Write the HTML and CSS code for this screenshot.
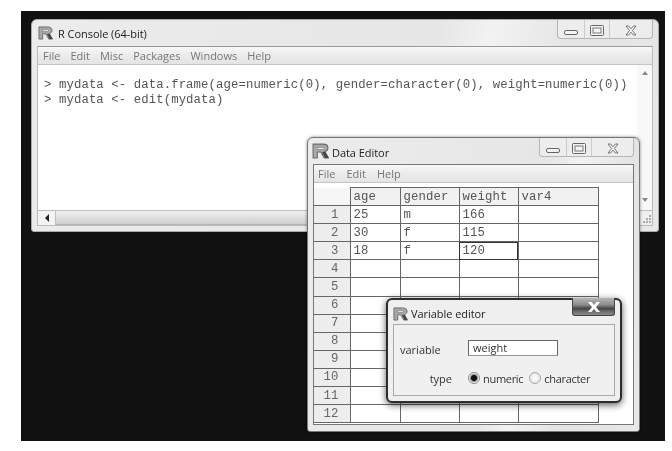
FILE: index.html
```html
<!DOCTYPE html>
<html lang="en">
<head>
<meta charset="utf-8">
<title>R Console</title>
<link rel="stylesheet" href="styles.css">
</head>
<body>
<svg class="defs" width="0" height="0" aria-hidden="true">
  <symbol id="rlogo" viewBox="0 0 16 15">
    <path d="M1 1H10.5C14 1 15 3 15 4.7C15 6.4 13.8 7.7 12 8.1L15.5 14H11.5L8.3 8.4H5V14H1Z" fill="#a8a8a8" stroke="#6a6a6a" stroke-width="1"/>
    <path d="M5 4H10C11 4 11.4 4.4 11.4 5C11.4 5.6 11 6 10 6H5Z" fill="#f4f4f4" stroke="#777" stroke-width=".7"/>
    <path d="M9.5 8.6L12.4 14H15.5L12.3 8.2Z" fill="#444"/>
  </symbol>
  <symbol id="btn-min" viewBox="0 0 14 5"><rect x=".5" y=".5" width="13" height="4" rx="1.5" fill="#f4f4f4" stroke="#666"/></symbol>
  <symbol id="btn-max" viewBox="0 0 14 11"><rect x=".5" y=".5" width="13" height="10" rx="1" fill="#f4f4f4" stroke="#666"/><rect x="3" y="3" width="8" height="5" fill="none" stroke="#777"/></symbol>
  <symbol id="btn-x" viewBox="0 0 12 11"><path d="M1 1H3.6L6 3.8L8.4 1H11L7.4 5.5L11 10H8.4L6 7.2L3.6 10H1L4.6 5.5Z" fill="#f4f4f4" stroke="#666" stroke-width=".9"/></symbol>
  <symbol id="btn-close" viewBox="0 0 14 12"><path d="M1 1H4.4L7 4L9.6 1H13L9 6L13 11H9.6L7 8L4.4 11H1L5 6Z" fill="#fff"/></symbol>
</svg>

<main class="desktop">

  <section class="window console">
    <header class="titlebar console-title">
      <svg class="logo"><use href="#rlogo"/></svg>
      <span class="title">R Console (64-bit)</span>
      <div class="controls controls-console">
        <span class="ctl ctl-min"><svg class="g-min"><use href="#btn-min"/></svg></span>
        <span class="ctl ctl-max"><svg class="g-max"><use href="#btn-max"/></svg></span>
        <span class="ctl ctl-x"><svg class="g-x"><use href="#btn-x"/></svg></span>
      </div>
    </header>
    <div class="client console-client">
      <nav class="menu">
        <span>File</span><span>Edit</span><span>Misc</span><span>Packages</span><span>Windows</span><span>Help</span>
      </nav>
      <div class="console-body">
        <pre class="console-text">&gt; mydata &lt;- data.frame(age=numeric(0), gender=character(0), weight=numeric(0))
&gt; mydata &lt;- edit(mydata)</pre>
        <div class="vscroll"><span class="arrow-up"></span><span class="arrow-down"></span></div>
      </div>
      <div class="hscroll">
        <span class="hs-left"><span class="arrow-left"></span></span>
        <span class="hs-thumb"></span>
        <span class="grip"><svg class="grip-dots" viewBox="0 0 11 11"><path d="M8 1h2v2H8zM5 4h2v2H5zM8 4h2v2H8zM2 7h2v2H2zM5 7h2v2H5zM8 7h2v2H8z" fill="#aaa"/></svg></span>
      </div>
    </div>
  </section>

  <section class="window editor">
    <header class="titlebar editor-title">
      <svg class="logo logo-big"><use href="#rlogo"/></svg>
      <span class="title">Data Editor</span>
      <div class="controls controls-editor">
        <span class="ctl ctl-min"><svg class="g-min"><use href="#btn-min"/></svg></span>
        <span class="ctl ctl-max"><svg class="g-max"><use href="#btn-max"/></svg></span>
        <span class="ctl ctl-x"><svg class="g-x"><use href="#btn-x"/></svg></span>
      </div>
    </header>
    <div class="client editor-client">
      <nav class="menu menu-editor"><span>File</span><span>Edit</span><span>Help</span></nav>
      <table class="sheet">
        <colgroup><col class="c0"><col class="c1"><col class="c2"><col class="c3"><col class="c4"></colgroup>
        <thead><tr><th class="corner"></th><th>age</th><th>gender</th><th>weight</th><th>var4</th></tr></thead>
        <tbody>
          <tr><th>1</th><td>25</td><td>m</td><td>166</td><td></td></tr>
          <tr><th>2</th><td>30</td><td>f</td><td>115</td><td></td></tr>
          <tr><th>3</th><td>18</td><td>f</td><td class="selected">120</td><td></td></tr>
          <tr><th>4</th><td></td><td></td><td></td><td></td></tr>
          <tr><th>5</th><td></td><td></td><td></td><td></td></tr>
          <tr><th>6</th><td></td><td></td><td></td><td></td></tr>
          <tr><th>7</th><td></td><td></td><td></td><td></td></tr>
          <tr><th>8</th><td></td><td></td><td></td><td></td></tr>
          <tr><th>9</th><td></td><td></td><td></td><td></td></tr>
          <tr><th>10</th><td></td><td></td><td></td><td></td></tr>
          <tr><th>11</th><td></td><td></td><td></td><td></td></tr>
          <tr><th>12</th><td></td><td></td><td></td><td></td></tr>
        </tbody>
      </table>
    </div>
  </section>

  <section class="window dialog">
    <header class="titlebar dialog-title">
      <svg class="logo"><use href="#rlogo"/></svg>
      <span class="title">Variable editor</span>
      <span class="close"><svg class="g-close"><use href="#btn-close"/></svg></span>
    </header>
    <div class="dialog-client">
      <span class="lbl">variable</span>
      <span class="field">weight</span>
      <span class="lbl lbl-type">type</span>
      <div class="radios">
        <span class="radio on"></span><span>numeric</span>
        <span class="radio"></span><span>character</span>
      </div>
    </div>
  </section>

</main>
</body>
</html>
```

FILE: styles.css
```css
* { box-sizing: border-box; }
html, body { margin: 0; padding: 0; background: #fff; }
body { width: 672px; height: 451px; overflow: hidden; padding: 11px 7px 10px 21px; font-family: "Open Sans", "Liberation Sans", sans-serif; }
.defs { position: absolute; }
.desktop { position: relative; width: 644px; height: 430px; background: #111; filter: blur(.45px); }

.window { position: absolute; display: flex; flex-direction: column; border-radius: 6px 6px 3px 3px; background: linear-gradient(105deg, #ececec 0%, #e6e6e6 60%, #f2f2f2 68%, #e4e4e4 80%, #e8e8e8 100%); }
.console { left: 10px; top: 8px; width: 628px; height: 213px; border: 1px solid #aaa; padding: 0 5px 5px; background-color: #eee; }
.editor { left: 286px; top: 126px; width: 333px; height: 295px; border: 1px solid #777; padding: 0 5px 6px; box-shadow: 0 0 3px rgba(0,0,0,.5); }
.dialog { left: 365px; top: 287px; width: 236px; height: 105px; border: 2px solid #2c2c2c; border-radius: 6px; padding: 0 5px 5px; background: #efefef; box-shadow: 0 2px 7px rgba(0,0,0,.65); }

.titlebar { display: flex; align-items: center; flex: none; position: relative; }
.console-title { height: 26px; }
.editor-title { height: 26px; }
.dialog-title { height: 24px; }
.logo { width: 15px; height: 14px; flex: none; margin-left: 1px; }
.logo-big { width: 17px; height: 16px; margin-left: -1px; }
.title { font-size: 11px; color: #222; margin-left: 5px; letter-spacing: -.05px; }
.editor-title .title { margin-left: 3px; margin-top: 2px; }
.dialog-title .title { margin-left: 3px; margin-top: 2px; }
.dialog-title .logo { margin-left: 0; margin-top: 3px; }

.controls { position: absolute; top: 0; display: flex; height: 19px; border: 1px solid #b5b5b5; border-top: 0; border-radius: 0 0 4px 4px; background: #ededed; }
.controls-console { right: 0; width: 96px; }
.controls-editor { right: 0; width: 95px; }
.ctl { display: flex; justify-content: center; border-right: 1px solid #ccc; }
.ctl:last-child { border-right: 0; flex: 1; }
.ctl-min { width: 27px; padding-top: 10px; }
.ctl-max { width: 25px; padding-top: 5px; }
.ctl-x { padding-top: 5px; }
.g-min { width: 14px; height: 5px; }
.g-max { width: 14px; height: 11px; }
.g-x { width: 12px; height: 11px; }

.client { flex: 1; min-height: 0; display: flex; flex-direction: column; border: 1px solid #8c8c8c; background: #fff; }
.console-client { border-color: #999 #bbb #bbb #bbb; }
.menu { display: flex; gap: 10px; flex: none; height: 18px; align-items: center; padding-left: 5px; font-size: 11px; color: #777; background: linear-gradient(#f8f8f8, #ececec 45%, #e4e4e4); border-bottom: 1px solid #c4c4c4; }
.menu-editor { gap: 11px; padding-left: 4px; }

.console-body { flex: 1; min-height: 0; display: flex; }
.console-text { flex: 1; margin: 0; padding: 13px 0 0 6px; font: 12.3px/15px "Liberation Mono", monospace; letter-spacing: .1px; color: #555; }
.vscroll { width: 15px; flex: none; display: flex; flex-direction: column; justify-content: space-between; align-items: center; padding: 6px 0 8px; background: #f8f8f8; }
.arrow-up { border: 3px solid transparent; border-top: 0; border-bottom: 4px solid #888; }
.arrow-down { border: 3px solid transparent; border-bottom: 0; border-top: 4px solid #888; }
.hscroll { height: 15px; flex: none; display: flex; background: #eee; border-top: 1px solid #bdbdbd; }
.hs-left { width: 17px; display: flex; align-items: center; justify-content: center; background: #f4f4f4; }
.arrow-left { border: 4px solid transparent; border-left: 0; border-right: 4px solid #222; }
.hs-thumb { flex: 1; background: linear-gradient(#f0f0f0, #dcdcdc 60%, #cfcfcf); border-left: 1px solid #c0c0c0; border-bottom: 1px solid #b5b5b5; }
.grip { width: 15px; flex: none; display: flex; align-items: flex-end; justify-content: flex-end; background: #f0f0f0; }
.grip-dots { width: 11px; height: 11px; }

.editor-client { border-color: #777; }
.sheet { margin-top: 4px; border-collapse: collapse; table-layout: fixed; width: 284px; font: 12.3px "Liberation Mono", monospace; letter-spacing: .1px; color: #555; }
.c0 { width: 36px; }
.c1 { width: 50px; }
.c2 { width: 59px; }
.c3 { width: 59px; }
.c4 { width: 80px; }
.sheet tr { height: 18.1px; }
.sheet th, .sheet td { border: 1px solid #666; padding: 0 0 0 3px; font-weight: 400; text-align: left; line-height: 14px; overflow: hidden; white-space: nowrap; }
.sheet thead th { background: #f1f1f1; }
.sheet .corner { background: #f6f6f6; border-top: 0; border-left: 0; }
.sheet tbody th { text-align: right; padding: 0 11px 0 0; background: #ededed; color: #666; border-left: 0; }
.sheet td.selected { outline: 1px solid #333; outline-offset: -1px; }

.close { position: absolute; right: 0; top: -2px; width: 43px; height: 18px; display: flex; align-items: center; justify-content: center; background: linear-gradient(#b5b5b5, #8c8c8c 40%, #454545 62%, #6a6a6a 78%, #8a8a8a); border: 1px solid #444; border-top: 0; border-radius: 0 0 3px 3px; }
.g-close { width: 14px; height: 12px; }
.dialog-client { flex: 1; min-height: 0; display: grid; grid-template-columns: 68px 1fr; grid-template-rows: 40px 1fr; border: 1px solid #aaa; background: #f0f0f0; font-size: 11px; color: #333; padding-left: 6px; }
.lbl { align-self: start; margin-top: 17px; }
.lbl-type { justify-self: end; margin-top: 6px; padding-right: 16px; }
.field { align-self: start; margin-top: 15px; width: 90px; height: 16px; padding-left: 4px; line-height: 13px; border: 1px solid #666; border-bottom-color: #999; background: #fff; }
.radios { display: flex; align-items: center; align-self: start; height: 18px; margin-top: 4px; letter-spacing: -.3px; }
.radio { width: 12px; height: 12px; border-radius: 50%; border: 1px solid #aaa; background: radial-gradient(#fff, #ddd); margin-right: 3px; flex: none; }
.radio.on { background: radial-gradient(circle, #111 0 2.5px, #888 3.5px, #eee 4.5px); border-color: #888; }
.radio:not(.on) { margin-left: 6px; }
```
